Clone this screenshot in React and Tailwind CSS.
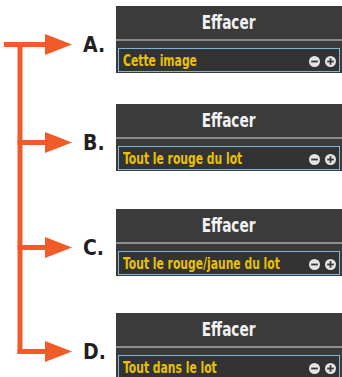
import React from "react";

const rows = [
  { label: "A.", text: "Cette image", h: "h-[98px]", line: "top" },
  { label: "B.", text: "Tout le rouge du lot", h: "h-[105px]", line: "mid" },
  { label: "C.", text: "Tout le rouge/jaune du lot", h: "h-[104px]", line: "mid" },
  { label: "D.", text: "Tout dans le lot", h: "h-[70px]", line: "end" },
];

const cond = { fontFamily: '"DejaVu Sans Condensed", "DejaVu Sans", sans-serif' };

const Bracket = ({ line }) => {
  // arrow sits 38px below the top of the row
  const y = 38.5;
  return (
    <svg width="80" height="110" className="shrink-0 overflow-visible" viewBox="0 0 80 110">
      {line === "top" && <line x1="20" y1={y - 2.5} x2="20" y2="110" stroke="#f15a29" strokeWidth="5" />}
      {line === "mid" && <line x1="20" y1="0" x2="20" y2="110" stroke="#f15a29" strokeWidth="5" />}
      {line === "end" && <line x1="20" y1="0" x2="20" y2={y + 2.5} stroke="#f15a29" strokeWidth="5" />}
      <line x1={line === "top" ? 4 : 17.5} y1={y} x2="48" y2={y} stroke="#f15a29" strokeWidth="5" />
      <polygon points={`45,${y - 10.5} 72,${y} 45,${y + 10.5}`} fill="#f15a29" />
    </svg>
  );
};

const RoundIcon = ({ plus }) => (
  <svg width="11" height="11" viewBox="0 0 11 11">
    <circle cx="5.5" cy="5.5" r="5.5" fill="#e4e4e4" />
    <rect x="2.2" y="4.6" width="6.6" height="1.8" fill="#3a3a3a" />
    {plus && <rect x="4.6" y="2.2" width="1.8" height="6.6" fill="#3a3a3a" />}
  </svg>
);

const Panel = ({ text }) => (
  <div className="w-[226px] bg-[#3b3b3b] flex flex-col">
    <div className="h-[33px] flex items-center justify-center">
      <span className="inline-block scale-x-[0.8] text-[#f2f2f2] text-[19px] font-bold leading-none" style={cond}>
        Effacer
      </span>
    </div>
    <div className="h-[2px] bg-[#8c8c8c]" />
    <div className="h-[7px]" />
    <div className="mx-[2px] h-[24px] border-[1.5px] border-[#7eb6dc] bg-[#333333] flex items-center pl-[4px] pr-[3px]">
      <div className="flex-1 min-w-0">
        <span className="inline-block origin-left scale-x-[0.8] whitespace-nowrap text-[#e8c200] text-[15px] font-bold leading-none" style={cond}>
          {text}
        </span>
      </div>
      <div className="shrink-0 flex items-center gap-[5px] pt-[3px]">
        <RoundIcon />
        <RoundIcon plus />
      </div>
    </div>
    <div className="h-[1px]" />
  </div>
);

export default function App() {
  return (
    <div className="w-[342px] h-[377px] bg-white overflow-hidden pt-[6px]">
      {rows.map((r) => (
        <div key={r.label} className={`${r.h} flex items-start`}>
          <div className="w-[116px] h-full flex items-start overflow-hidden">
            <Bracket line={r.line} />
            <span className="mt-[29px] ml-[3px] text-[#231f20] text-[21px] font-bold leading-none" style={cond}>
              {r.label}
            </span>
          </div>
          <Panel text={r.text} />
        </div>
      ))}
    </div>
  );
}
